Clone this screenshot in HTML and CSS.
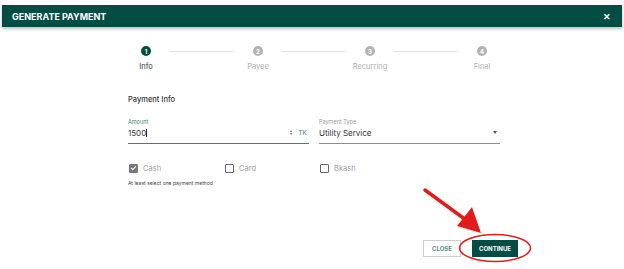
FILE: index.html
```html
<!DOCTYPE html>
<html lang="en">
<head>
  <meta charset="UTF-8" />
  <title>Generate Payment</title>
  <link rel="stylesheet" href="styles.css">
</head>
<body>
  <div class="modal">
    <div class="modal-header">
      <span class="modal-title">GENERATE PAYMENT</span>
      <span class="modal-close">&#x2715;</span>
    </div>

    <div class="stepper">
      <div class="step active"><span class="dot">1</span><span class="step-label">Info</span></div>
      <div class="connector"></div>
      <div class="step"><span class="dot">2</span><span class="step-label">Payee</span></div>
      <div class="connector"></div>
      <div class="step"><span class="dot">3</span><span class="step-label">Recurring</span></div>
      <div class="connector"></div>
      <div class="step"><span class="dot">4</span><span class="step-label">Final</span></div>
    </div>

    <div class="form">
      <h3 class="section-title">Payment Info</h3>

      <div class="field-row">
        <div class="field focused">
          <label>Amount</label>
          <div class="control">
            <span class="value">1500<span class="caret"></span></span>
            <span class="spin">&#x25B4;<br>&#x25BE;</span>
            <span class="suffix">TK</span>
          </div>
        </div>
        <div class="field">
          <label>Payment Type</label>
          <div class="control">
            <span class="value">Utility Service</span>
            <span class="select-arrow"></span>
          </div>
        </div>
      </div>

      <div class="checks">
        <div class="check checked"><span class="box"></span>Cash</div>
        <div class="check"><span class="box"></span>Card</div>
        <div class="check"><span class="box"></span>Bkash</div>
      </div>
      <p class="hint">At least select one payment method</p>
    </div>

    <div class="actions">
      <button class="btn btn-outline">CLOSE</button>
      <button class="btn btn-primary">CONTINUE</button>
    </div>
  </div>

  <!-- red annotation drawn over the screenshot -->
  <svg class="annotation" width="624" height="269" viewBox="0 0 624 269">
    <line x1="425" y1="190" x2="466" y2="220" stroke="#e31b1b" stroke-width="3.5" stroke-linecap="round"/>
    <polygon points="481,233 457,226 472,207" fill="#e31b1b"/>
    <ellipse cx="495" cy="248" rx="35.5" ry="13.5" fill="none" stroke="#e31b1b" stroke-width="1.5"/>
  </svg>
</body>
</html>
```

FILE: styles.css
```css
body {
  margin: 0;
  width: 624px;
  height: 269px;
  background: #fff;
  font-family: Inter, Roboto, "Liberation Sans", sans-serif;
  font-weight: 400;
  color: #333;
  overflow: hidden;
  position: relative;
}

.modal {
  padding-top: 5px;
}

.modal-header {
  margin: 0 2px;
  height: 22px;
  background: #034d44;
  color: #fff;
  display: flex;
  align-items: center;
  justify-content: space-between;
  padding: 0 10px;
  box-shadow: 0 2px 3px rgba(0, 0, 0, 0.25);
}

.modal-title {
  font-size: 9px;
  font-weight: 700;
}

.modal-close {
  font-size: 9px;
  font-weight: 700;
  margin-right: 1px;
}

/* stepper */
.stepper {
  display: flex;
  width: 376px;
  margin: 19px 0 0 126px;
}

.step {
  width: 40px;
  display: flex;
  flex-direction: column;
  align-items: center;
}

.dot {
  width: 10px;
  height: 10px;
  border-radius: 50%;
  background: #b3b3b3;
  color: #fff;
  font-size: 6px;
  font-weight: 700;
  display: flex;
  align-items: center;
  justify-content: center;
}

.step.active .dot {
  background: #034d44;
}

.step-label {
  margin-top: 6px;
  font-size: 7.5px;
  font-weight: 400;
  color: #b0b0b0;
}

.step.active .step-label {
  color: #333;
}

.connector {
  flex: 1;
  height: 1px;
  background: #e3e3e3;
  margin: 5px 4px 0;
}

/* form */
.form {
  padding-left: 128px;
}

.section-title {
  margin: 24px 0 0;
  font-size: 7.5px;
  font-weight: 500;
  color: #333;
}

.field-row {
  display: flex;
  gap: 10px;
  margin-top: 15px;
}

.field {
  width: 181px;
  border-bottom: 1px solid #8d8d8d;
}

.field.focused {
  border-bottom: 1.5px solid #4a7d74;
}

.field label {
  display: block;
  font-size: 5.5px;
  color: #999;
  line-height: 7px;
}

.field.focused label {
  color: #3d7a70;
}

.control {
  display: flex;
  align-items: center;
  height: 13px;
  padding-bottom: 4px;
  font-size: 8px;
  color: #333;
}

.value {
  flex: 1;
}

.caret {
  display: inline-block;
  width: 1px;
  height: 8px;
  background: #333;
  vertical-align: -1px;
}

.spin {
  font-size: 3.5px;
  line-height: 3px;
  color: #666;
  margin-right: 6px;
}

.suffix {
  font-size: 6.5px;
  color: #3d7a70;
  margin-right: 2px;
}

.select-arrow {
  width: 0;
  height: 0;
  border-left: 2.5px solid transparent;
  border-right: 2.5px solid transparent;
  border-top: 3px solid #555;
  margin-right: 3px;
}

.checks {
  display: grid;
  grid-template-columns: 96px 95px auto;
  margin-top: 20px;
  padding-left: 1px;
}

.check {
  display: flex;
  align-items: center;
  gap: 5px;
  font-size: 7.5px;
  color: #a0a0a0;
}

.box {
  width: 7px;
  height: 7px;
  border: 1px solid #666;
  border-radius: 1px;
  position: relative;
}

.check.checked .box {
  background: #777;
  border-color: #777;
}

.check.checked .box::after {
  content: "";
  position: absolute;
  left: 2px;
  top: 0px;
  width: 2px;
  height: 4px;
  border: solid #fff;
  border-width: 0 1px 1px 0;
  transform: rotate(45deg);
}

.hint {
  margin: 7px 0 0;
  font-size: 5px;
  color: #444;
}

/* footer buttons */
.actions {
  display: flex;
  justify-content: flex-end;
  gap: 11px;
  margin: 54px 106px 0 0;
}

.btn {
  height: 17px;
  font-family: Inter, Roboto, "Liberation Sans", sans-serif;
  font-size: 6px;
  font-weight: 700;
  border-radius: 0;
  padding: 0;
  cursor: pointer;
}

.btn-outline {
  width: 38px;
  background: #fff;
  border: 1px solid #cfcfcf;
  color: #5d8d86;
}

.btn-primary {
  width: 46px;
  background: #034d44;
  border: 1px solid #034d44;
  color: #fff;
}

.annotation {
  position: absolute;
  left: 0;
  top: 0;
  pointer-events: none;
}
```
